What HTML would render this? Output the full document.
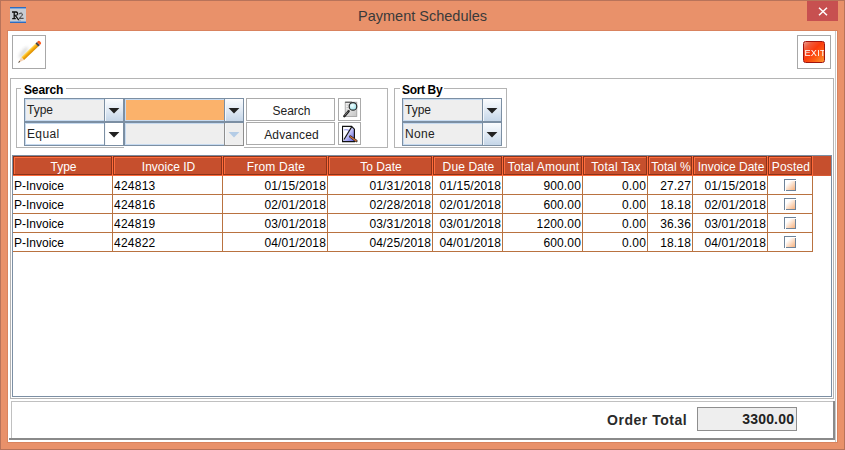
<!DOCTYPE html><html><head><meta charset="utf-8"><style>
html,body{margin:0;padding:0;width:845px;height:450px;overflow:hidden;}
body{position:relative;background:#E9916A;font-family:"Liberation Sans", sans-serif;}
div{box-sizing:border-box;}
</style></head><body>
<div style="position:absolute;left:0;top:0;width:845px;height:450px;border:1px solid #B8735A;"></div>
<div style="position:absolute;left:10px;top:7px;width:16px;height:16px;background:#C8CCD3;overflow:hidden;">
<div style="position:absolute;left:0;top:0;width:16px;height:1px;background:#2D6CC0"></div>
<div style="position:absolute;left:0;top:1px;width:16px;height:1px;background:#7FA6D8"></div>
<div style="position:absolute;left:0;top:14px;width:16px;height:1px;background:#7FA6D8"></div>
<div style="position:absolute;left:0;top:15px;width:16px;height:1px;background:#2D6CC0"></div>
<svg style="position:absolute;left:0;top:0" width="16" height="16" viewBox="0 0 16 16">
<path d="M2 5 L4.2 5 L4.2 11.6 M2.2 11.6 L5.8 11.6 M4.2 5 L6 5 Q7.8 5.2 7.6 7 Q7.4 8.4 5 8.4 L4.4 8.4 M5.4 8.6 L8.8 13.2" stroke="#111" stroke-width="1.3" fill="none"/>
<path d="M8.8 7.4 Q9.8 5.9 11.3 6.1 Q12.8 6.5 12.2 8.2 Q11.6 9.4 9.2 11.3 L13.6 11.3" stroke="#333" stroke-width="1.0" fill="none"/>
<path d="M9.5 13.4 L10.5 13.4" stroke="#5A7AA8" stroke-width="0.8"/>
</svg>
</div>
<div style="position:absolute;left:0px;top:7.78px;width:845px;height:17px;line-height:17px;font-size:14.5px;color:#3A3A3A;font-weight:normal;text-align:center;white-space:nowrap;">Payment Schedules</div>
<div style="position:absolute;left:807px;top:1px;width:31px;height:20px;background:#C75050"></div>
<svg style="position:absolute;left:818px;top:7px" width="10" height="9" viewBox="0 0 10 9"><path d="M1 0.8 L9 8.2 M9 0.8 L1 8.2" stroke="#fff" stroke-width="1.5"/></svg>
<div style="position:absolute;left:8px;top:31px;width:829px;height:411px;background:#fff"></div>
<div style="position:absolute;left:7px;top:30px;width:1px;height:413px;background:#D9835E"></div>
<div style="position:absolute;left:7px;top:30px;width:831px;height:1px;background:#D9835E"></div>
<div style="position:absolute;left:837px;top:30px;width:1px;height:413px;background:#D9835E"></div>
<div style="position:absolute;left:7px;top:442px;width:831px;height:1px;background:#D9835E"></div>
<div style="position:absolute;left:835px;top:31px;width:1px;height:411px;background:#C8C8C8"></div>
<div style="position:absolute;left:12px;top:35px;width:34px;height:34px;border:1px solid #A8A8A8"></div>
<div style="position:absolute;left:797px;top:35px;width:34px;height:34px;border:1px solid #A8A8A8"></div>
<svg style="position:absolute;left:10px;top:33px" width="40" height="40" viewBox="0 0 40 40">
<defs><linearGradient id="pb" x1="0" y1="0" x2="0" y2="1"><stop offset="0" stop-color="#FFE070"/><stop offset="0.45" stop-color="#F8B010"/><stop offset="1" stop-color="#D88A00"/></linearGradient>
<linearGradient id="pw" x1="0" y1="0" x2="1" y2="0"><stop offset="0" stop-color="#E8B890"/><stop offset="1" stop-color="#F8DCC0"/></linearGradient>
<filter id="bl" x="-50%" y="-50%" width="200%" height="200%"><feGaussianBlur stdDeviation="1.6"/></filter></defs>
<ellipse cx="0" cy="0" rx="7" ry="2.2" fill="#999" opacity="0.35" filter="url(#bl)" transform="translate(13.5,19.5) rotate(-52)"/>
<g transform="translate(8.2,29.8) rotate(-43.6)">
<path d="M0 0 L6.2 -2.0 L6.2 2.0 Z" fill="url(#pw)"/>
<path d="M0 0 L2.0 -0.7 L2.0 0.7 Z" fill="#222"/>
<rect x="6.2" y="-2.0" width="19.6" height="4.0" fill="url(#pb)"/>
<rect x="25.8" y="-2.0" width="2.2" height="4.0" fill="#2A2A2A"/>
<rect x="26.8" y="-2.0" width="0.5" height="4.0" fill="#999"/>
<path d="M28 -2.0 L29.4 -2.0 Q30.6 -2.0 30.6 0 Q30.6 2.0 29.4 2.0 L28 2.0 Z" fill="#FF5A1E"/>
</g>
</svg>
<div style="position:absolute;left:803px;top:41px;width:22px;height:22px;border:1px solid #A0140E;border-radius:2.5px;background:linear-gradient(135deg,#EC9A8C 0%,#F05A3A 20%,#FA3A0C 45%,#FC5A14 68%,#FF9830 100%);overflow:hidden;">
<div style="position:absolute;left:0px;top:6.4px;width:20px;text-align:center;font-size:9.6px;line-height:10px;color:#fff;letter-spacing:0.3px;transform:scaleX(0.95);transform-origin:center;">EXIT</div>
</div>
<div style="position:absolute;left:10px;top:78px;width:824px;height:321px;border:1px solid #B4B4B4"></div>
<div style="position:absolute;left:16px;top:88px;width:1px;height:60px;background:#B4B4B4"></div>
<div style="position:absolute;left:387px;top:88px;width:1px;height:60px;background:#B4B4B4"></div>
<div style="position:absolute;left:16px;top:88px;width:5px;height:1px;background:#B4B4B4"></div>
<div style="position:absolute;left:66px;top:88px;width:322px;height:1px;background:#B4B4B4"></div>
<div style="position:absolute;left:16px;top:147px;width:108px;height:1px;background:#B4B4B4"></div>
<div style="position:absolute;left:244px;top:147px;width:144px;height:1px;background:#B4B4B4"></div>
<div style="position:absolute;left:24px;top:82.54px;white-space:nowrap;height:14px;line-height:14px;font-size:12px;color:#000;font-weight:bold;text-align:left;white-space:nowrap;letter-spacing:-0.15px;">Search</div>
<div style="position:absolute;left:394px;top:88px;width:1px;height:60px;background:#B4B4B4"></div>
<div style="position:absolute;left:506px;top:88px;width:1px;height:60px;background:#B4B4B4"></div>
<div style="position:absolute;left:394px;top:88px;width:6px;height:1px;background:#B4B4B4"></div>
<div style="position:absolute;left:444px;top:88px;width:63px;height:1px;background:#B4B4B4"></div>
<div style="position:absolute;left:394px;top:147px;width:113px;height:1px;background:#B4B4B4"></div>
<div style="position:absolute;left:402px;top:82.54px;white-space:nowrap;height:14px;line-height:14px;font-size:12px;color:#000;font-weight:bold;text-align:left;white-space:nowrap;letter-spacing:-0.35px;">Sort By</div>
<div style="position:absolute;left:24px;top:98px;width:100px;height:24px;border:1px solid #7C8FA3;background:#EEEEEE;box-shadow:inset 0 0 0 1px #C6DAF0;"></div>
<div style="position:absolute;left:105px;top:99px;width:18px;height:22px;background:linear-gradient(#FBFCFE,#E4ECF5 45%,#C5D6E8);box-shadow:inset 1px 0 0 #F4F8FC;"></div>
<div style="position:absolute;left:104px;top:99px;width:1px;height:22px;background:#7C8FA3"></div>
<svg style="position:absolute;left:108.0px;top:108px" width="12" height="6" viewBox="0 0 12 6"><path d="M0.6 0 L11.4 0 L6 5.6 Z" fill="#222"/></svg>
<div style="position:absolute;left:27px;top:102.84px;white-space:nowrap;height:14px;line-height:14px;font-size:12px;color:#222;font-weight:normal;text-align:left;white-space:nowrap;letter-spacing:0px;">Type</div>
<div style="position:absolute;left:24px;top:122px;width:100px;height:24px;border:1px solid #7C8FA3;background:#FFFFFF;box-shadow:inset 0 0 0 1px #C6DAF0;"></div>
<div style="position:absolute;left:105px;top:123px;width:18px;height:22px;background:#fff;box-shadow:inset 1px 0 0 #F4F8FC;"></div>
<div style="position:absolute;left:104px;top:123px;width:1px;height:22px;background:#7C8FA3"></div>
<svg style="position:absolute;left:108.0px;top:132px" width="12" height="6" viewBox="0 0 12 6"><path d="M0.6 0 L11.4 0 L6 5.6 Z" fill="#222"/></svg>
<div style="position:absolute;left:27px;top:126.84px;white-space:nowrap;height:14px;line-height:14px;font-size:12px;color:#222;font-weight:normal;text-align:left;white-space:nowrap;letter-spacing:0.35px;">Equal</div>
<div style="position:absolute;left:124px;top:98px;width:120px;height:24px;border:1px solid #7C8FA3;background:#FBB26B;box-shadow:inset 0 0 0 1px #C6DAF0;"></div>
<div style="position:absolute;left:225px;top:99px;width:18px;height:22px;background:linear-gradient(#FBFCFE,#E4ECF5 45%,#C5D6E8);box-shadow:inset 1px 0 0 #F4F8FC;"></div>
<div style="position:absolute;left:224px;top:99px;width:1px;height:22px;background:#7C8FA3"></div>
<svg style="position:absolute;left:228.0px;top:108px" width="12" height="6" viewBox="0 0 12 6"><path d="M0.6 0 L11.4 0 L6 5.6 Z" fill="#222"/></svg>
<div style="position:absolute;left:124px;top:122px;width:120px;height:24px;border:1px solid #7C8FA3;background:#EEEEEE;box-shadow:inset 0 0 0 1px #C6DAF0;"></div>
<div style="position:absolute;left:225px;top:123px;width:18px;height:22px;background:#EEEEEE;box-shadow:inset 1px 0 0 #F4F8FC;"></div>
<div style="position:absolute;left:224px;top:123px;width:1px;height:22px;background:#7C8FA3"></div>
<svg style="position:absolute;left:228.0px;top:132px" width="12" height="6" viewBox="0 0 12 6"><path d="M0.6 0 L11.4 0 L6 5.6 Z" fill="#B4CCE6"/></svg>
<div style="position:absolute;left:224px;top:123px;width:1px;height:23px;background:#8E8E8E"></div>
<div style="position:absolute;left:243px;top:123px;width:1px;height:23px;background:#8E8E8E"></div>
<div style="position:absolute;left:224px;top:145px;width:20px;height:1px;background:#8E8E8E"></div>
<div style="position:absolute;left:225px;top:123px;width:18px;height:1px;background:#EEEEEE"></div>
<div style="position:absolute;left:242px;top:123px;width:1px;height:22px;background:#EEEEEE"></div>
<div style="position:absolute;left:225px;top:144px;width:18px;height:1px;background:#EEEEEE"></div>
<div style="position:absolute;left:402px;top:98px;width:100px;height:24px;border:1px solid #7C8FA3;background:#EEEEEE;box-shadow:inset 0 0 0 1px #C6DAF0;"></div>
<div style="position:absolute;left:483px;top:99px;width:18px;height:22px;background:linear-gradient(#FBFCFE,#E4ECF5 45%,#C5D6E8);box-shadow:inset 1px 0 0 #F4F8FC;"></div>
<div style="position:absolute;left:482px;top:99px;width:1px;height:22px;background:#7C8FA3"></div>
<svg style="position:absolute;left:486.0px;top:108px" width="12" height="6" viewBox="0 0 12 6"><path d="M0.6 0 L11.4 0 L6 5.6 Z" fill="#222"/></svg>
<div style="position:absolute;left:405px;top:102.84px;white-space:nowrap;height:14px;line-height:14px;font-size:12px;color:#222;font-weight:normal;text-align:left;white-space:nowrap;letter-spacing:0px;">Type</div>
<div style="position:absolute;left:402px;top:122px;width:100px;height:24px;border:1px solid #7C8FA3;background:#EEEEEE;box-shadow:inset 0 0 0 1px #C6DAF0;"></div>
<div style="position:absolute;left:483px;top:123px;width:18px;height:22px;background:linear-gradient(#FBFCFE,#E4ECF5 45%,#C5D6E8);box-shadow:inset 1px 0 0 #F4F8FC;"></div>
<div style="position:absolute;left:482px;top:123px;width:1px;height:22px;background:#7C8FA3"></div>
<svg style="position:absolute;left:486.0px;top:132px" width="12" height="6" viewBox="0 0 12 6"><path d="M0.6 0 L11.4 0 L6 5.6 Z" fill="#222"/></svg>
<div style="position:absolute;left:405px;top:126.84px;white-space:nowrap;height:14px;line-height:14px;font-size:12px;color:#222;font-weight:normal;text-align:left;white-space:nowrap;letter-spacing:0.3px;">None</div>
<div style="position:absolute;left:246px;top:98px;width:89px;height:23px;border:1px solid #ABABAB;background:#fff;"></div>
<div style="position:absolute;left:247px;top:103.84px;width:89px;height:14px;line-height:14px;font-size:12px;color:#222;font-weight:normal;text-align:center;white-space:nowrap;letter-spacing:0px;">Search</div>
<div style="position:absolute;left:246px;top:122px;width:89px;height:23px;border:1px solid #ABABAB;background:#fff;"></div>
<div style="position:absolute;left:247px;top:127.84px;width:89px;height:14px;line-height:14px;font-size:12px;color:#222;font-weight:normal;text-align:center;white-space:nowrap;letter-spacing:0.15px;">Advanced</div>
<div style="position:absolute;left:338px;top:98px;width:23px;height:23px;border:1px solid #ABABAB;background:#fff;"></div>
<div style="position:absolute;left:338px;top:122px;width:23px;height:23px;border:1px solid #ABABAB;background:#fff;"></div>
<svg style="position:absolute;left:336px;top:96px" width="28" height="28" viewBox="0 0 28 28">
<defs><linearGradient id="dg" x1="0" y1="0" x2="1" y2="1"><stop offset="0" stop-color="#F8F8F8"/><stop offset="1" stop-color="#C4C4C4"/></linearGradient>
<radialGradient id="lg" cx="0.4" cy="0.4" r="0.65"><stop offset="0" stop-color="#F4FFFF"/><stop offset="1" stop-color="#98E0EA"/></radialGradient></defs>
<rect x="9.2" y="6.2" width="11.6" height="14.3" fill="url(#dg)" stroke="#9C9C9C" stroke-width="0.8"/>
<path d="M9.2 6.2 L16 6.2" stroke="#444" stroke-width="1"/>
<path d="M10.5 9 L13 9 M10.5 11.5 L12.5 11.5 M10.5 14 L12.5 14" stroke="#B8B8B8" stroke-width="0.8"/>
<path d="M8.3 20.2 L12.6 15.2" stroke="#222" stroke-width="2.4" stroke-linecap="round"/>
<path d="M8.8 19.4 L12 15.6" stroke="#A0A0A0" stroke-width="0.7"/>
<circle cx="17" cy="10.4" r="3.8" fill="url(#lg)" stroke="#2A2A2A" stroke-width="1.2"/>
</svg>
<svg style="position:absolute;left:336px;top:120px" width="28" height="28" viewBox="0 0 28 28">
<defs><linearGradient id="ag" x1="0" y1="0" x2="1" y2="1"><stop offset="0" stop-color="#FFFFFF"/><stop offset="0.4" stop-color="#D8D8FA"/><stop offset="1" stop-color="#5A5AE0"/></linearGradient></defs>
<path d="M6.6 6.4 L15.6 6.4 L18.4 9.2 L18.4 21.6 L6.6 21.6 Z" fill="url(#ag)" stroke="#111" stroke-width="1.2"/>
<path d="M7.2 21 L7.2 7 L15 7 Z" fill="#fff" opacity="0.85"/>
<path d="M8 10 Q11 9 13.5 11" stroke="#A8A8F0" stroke-width="1.2" fill="none"/>
<path d="M8 19.5 L15.6 7" stroke="#111" stroke-width="1.2"/>
<path d="M14.2 16.6 L20.4 21" stroke="#222" stroke-width="2.4" stroke-linecap="round"/>
<path d="M14.4 16.7 L20.2 20.9" stroke="#D0703A" stroke-width="1.3" stroke-linecap="round"/>
</svg>
<div style="position:absolute;left:12px;top:155px;width:820px;height:1px;background:#7C8FA3"></div>
<div style="position:absolute;left:12px;top:155px;width:1px;height:242px;background:#7C8FA3"></div>
<div style="position:absolute;left:831px;top:155px;width:1px;height:242px;background:#7C8FA3"></div>
<div style="position:absolute;left:12px;top:396px;width:820px;height:1px;background:#7C8FA3"></div>
<div style="position:absolute;left:13px;top:156px;width:818px;height:20px;background:#C64F2D"></div>
<div style="position:absolute;left:13px;top:156px;width:800px;height:20px;background:#FF6A3A"></div>
<div style="position:absolute;left:13px;top:156px;width:99px;height:19px;border:1px solid #8C3319;background:#C64F2D;box-shadow:inset 1px 1px 0 #FF6E3E;"></div>
<div style="position:absolute;left:14px;top:159.84px;width:99px;height:14px;line-height:14px;font-size:12px;color:#FFFFFF;font-weight:normal;text-align:center;white-space:nowrap;letter-spacing:0px;">Type</div>
<div style="position:absolute;left:113px;top:156px;width:109px;height:19px;border:1px solid #8C3319;background:#C64F2D;box-shadow:inset 1px 1px 0 #FF6E3E;"></div>
<div style="position:absolute;left:114px;top:159.84px;width:109px;height:14px;line-height:14px;font-size:12px;color:#FFFFFF;font-weight:normal;text-align:center;white-space:nowrap;letter-spacing:0px;">Invoice ID</div>
<div style="position:absolute;left:223px;top:156px;width:104px;height:19px;border:1px solid #8C3319;background:#C64F2D;box-shadow:inset 1px 1px 0 #FF6E3E;"></div>
<div style="position:absolute;left:224px;top:159.84px;width:104px;height:14px;line-height:14px;font-size:12px;color:#FFFFFF;font-weight:normal;text-align:center;white-space:nowrap;letter-spacing:0.2px;">From Date</div>
<div style="position:absolute;left:328px;top:156px;width:104px;height:19px;border:1px solid #8C3319;background:#C64F2D;box-shadow:inset 1px 1px 0 #FF6E3E;"></div>
<div style="position:absolute;left:329px;top:159.84px;width:104px;height:14px;line-height:14px;font-size:12px;color:#FFFFFF;font-weight:normal;text-align:center;white-space:nowrap;letter-spacing:0px;">To Date</div>
<div style="position:absolute;left:433px;top:156px;width:69px;height:19px;border:1px solid #8C3319;background:#C64F2D;box-shadow:inset 1px 1px 0 #FF6E3E;"></div>
<div style="position:absolute;left:434px;top:159.84px;width:69px;height:14px;line-height:14px;font-size:12px;color:#FFFFFF;font-weight:normal;text-align:center;white-space:nowrap;letter-spacing:0.14px;">Due Date</div>
<div style="position:absolute;left:503px;top:156px;width:79px;height:19px;border:1px solid #8C3319;background:#C64F2D;box-shadow:inset 1px 1px 0 #FF6E3E;"></div>
<div style="position:absolute;left:504px;top:159.84px;width:79px;height:14px;line-height:14px;font-size:12px;color:#FFFFFF;font-weight:normal;text-align:center;white-space:nowrap;letter-spacing:0.18px;">Total Amount</div>
<div style="position:absolute;left:583px;top:156px;width:64px;height:19px;border:1px solid #8C3319;background:#C64F2D;box-shadow:inset 1px 1px 0 #FF6E3E;"></div>
<div style="position:absolute;left:584px;top:159.84px;width:64px;height:14px;line-height:14px;font-size:12px;color:#FFFFFF;font-weight:normal;text-align:center;white-space:nowrap;letter-spacing:0.25px;">Total Tax</div>
<div style="position:absolute;left:648px;top:156px;width:44px;height:19px;border:1px solid #8C3319;background:#C64F2D;box-shadow:inset 1px 1px 0 #FF6E3E;"></div>
<div style="position:absolute;left:649px;top:159.84px;width:44px;height:14px;line-height:14px;font-size:12px;color:#FFFFFF;font-weight:normal;text-align:center;white-space:nowrap;letter-spacing:0px;">Total %</div>
<div style="position:absolute;left:693px;top:156px;width:74px;height:19px;border:1px solid #8C3319;background:#C64F2D;box-shadow:inset 1px 1px 0 #FF6E3E;"></div>
<div style="position:absolute;left:694px;top:159.84px;width:74px;height:14px;line-height:14px;font-size:12px;color:#FFFFFF;font-weight:normal;text-align:center;white-space:nowrap;letter-spacing:0px;">Invoice Date</div>
<div style="position:absolute;left:768px;top:156px;width:44px;height:19px;border:1px solid #8C3319;background:#C64F2D;box-shadow:inset 1px 1px 0 #FF6E3E;"></div>
<div style="position:absolute;left:769px;top:159.84px;width:44px;height:14px;line-height:14px;font-size:12px;color:#FFFFFF;font-weight:normal;text-align:center;white-space:nowrap;letter-spacing:0.17px;">Posted</div>
<div style="position:absolute;left:13px;top:175px;width:800px;height:1px;background:#FF6A3A"></div>
<div style="position:absolute;left:813px;top:175px;width:18px;height:1px;background:#D85A34"></div>
<div style="position:absolute;left:13px;top:194px;width:800px;height:1px;background:#B97240"></div>
<div style="position:absolute;left:14px;top:179.34px;white-space:nowrap;height:14px;line-height:14px;font-size:12px;color:#000;font-weight:normal;text-align:left;white-space:nowrap;">P-Invoice</div>
<div style="position:absolute;left:114px;top:179.34px;white-space:nowrap;height:14px;line-height:14px;font-size:12px;color:#000;font-weight:normal;text-align:left;white-space:nowrap;letter-spacing:0.25px;">424813</div>
<div style="position:absolute;left:223px;top:179.34px;width:103px;height:14px;line-height:14px;font-size:12px;color:#000;font-weight:normal;text-align:right;white-space:nowrap;letter-spacing:0.15px;">01/15/2018</div>
<div style="position:absolute;left:328px;top:179.34px;width:103px;height:14px;line-height:14px;font-size:12px;color:#000;font-weight:normal;text-align:right;white-space:nowrap;letter-spacing:0.15px;">01/31/2018</div>
<div style="position:absolute;left:433px;top:179.34px;width:68px;height:14px;line-height:14px;font-size:12px;color:#000;font-weight:normal;text-align:right;white-space:nowrap;letter-spacing:0.15px;">01/15/2018</div>
<div style="position:absolute;left:503px;top:179.34px;width:78px;height:14px;line-height:14px;font-size:12px;color:#000;font-weight:normal;text-align:right;white-space:nowrap;letter-spacing:0.15px;">900.00</div>
<div style="position:absolute;left:583px;top:179.34px;width:63px;height:14px;line-height:14px;font-size:12px;color:#000;font-weight:normal;text-align:right;white-space:nowrap;letter-spacing:0.15px;">0.00</div>
<div style="position:absolute;left:648px;top:179.34px;width:43px;height:14px;line-height:14px;font-size:12px;color:#000;font-weight:normal;text-align:right;white-space:nowrap;letter-spacing:0.15px;">27.27</div>
<div style="position:absolute;left:693px;top:179.34px;width:73px;height:14px;line-height:14px;font-size:12px;color:#000;font-weight:normal;text-align:right;white-space:nowrap;letter-spacing:0.15px;">01/15/2018</div>
<div style="position:absolute;left:786px;top:181px;width:9px;height:9px;background:linear-gradient(135deg,#FFFFFF 22%,#FCE2CE 50%,#F7B07C 100%)"></div>
<div style="position:absolute;left:784px;top:179px;width:12px;height:1px;background:#6E8399"></div>
<div style="position:absolute;left:784px;top:179px;width:1px;height:12px;background:#6E8399"></div>
<div style="position:absolute;left:795px;top:181px;width:1px;height:10px;background:#6E8399"></div>
<div style="position:absolute;left:786px;top:190px;width:10px;height:1px;background:#6E8399"></div>
<div style="position:absolute;left:13px;top:213px;width:800px;height:1px;background:#B97240"></div>
<div style="position:absolute;left:14px;top:198.34px;white-space:nowrap;height:14px;line-height:14px;font-size:12px;color:#000;font-weight:normal;text-align:left;white-space:nowrap;">P-Invoice</div>
<div style="position:absolute;left:114px;top:198.34px;white-space:nowrap;height:14px;line-height:14px;font-size:12px;color:#000;font-weight:normal;text-align:left;white-space:nowrap;letter-spacing:0.25px;">424816</div>
<div style="position:absolute;left:223px;top:198.34px;width:103px;height:14px;line-height:14px;font-size:12px;color:#000;font-weight:normal;text-align:right;white-space:nowrap;letter-spacing:0.15px;">02/01/2018</div>
<div style="position:absolute;left:328px;top:198.34px;width:103px;height:14px;line-height:14px;font-size:12px;color:#000;font-weight:normal;text-align:right;white-space:nowrap;letter-spacing:0.15px;">02/28/2018</div>
<div style="position:absolute;left:433px;top:198.34px;width:68px;height:14px;line-height:14px;font-size:12px;color:#000;font-weight:normal;text-align:right;white-space:nowrap;letter-spacing:0.15px;">02/01/2018</div>
<div style="position:absolute;left:503px;top:198.34px;width:78px;height:14px;line-height:14px;font-size:12px;color:#000;font-weight:normal;text-align:right;white-space:nowrap;letter-spacing:0.15px;">600.00</div>
<div style="position:absolute;left:583px;top:198.34px;width:63px;height:14px;line-height:14px;font-size:12px;color:#000;font-weight:normal;text-align:right;white-space:nowrap;letter-spacing:0.15px;">0.00</div>
<div style="position:absolute;left:648px;top:198.34px;width:43px;height:14px;line-height:14px;font-size:12px;color:#000;font-weight:normal;text-align:right;white-space:nowrap;letter-spacing:0.15px;">18.18</div>
<div style="position:absolute;left:693px;top:198.34px;width:73px;height:14px;line-height:14px;font-size:12px;color:#000;font-weight:normal;text-align:right;white-space:nowrap;letter-spacing:0.15px;">02/01/2018</div>
<div style="position:absolute;left:786px;top:200px;width:9px;height:9px;background:linear-gradient(135deg,#FFFFFF 22%,#FCE2CE 50%,#F7B07C 100%)"></div>
<div style="position:absolute;left:784px;top:198px;width:12px;height:1px;background:#6E8399"></div>
<div style="position:absolute;left:784px;top:198px;width:1px;height:12px;background:#6E8399"></div>
<div style="position:absolute;left:795px;top:200px;width:1px;height:10px;background:#6E8399"></div>
<div style="position:absolute;left:786px;top:209px;width:10px;height:1px;background:#6E8399"></div>
<div style="position:absolute;left:13px;top:232px;width:800px;height:1px;background:#B97240"></div>
<div style="position:absolute;left:14px;top:217.34px;white-space:nowrap;height:14px;line-height:14px;font-size:12px;color:#000;font-weight:normal;text-align:left;white-space:nowrap;">P-Invoice</div>
<div style="position:absolute;left:114px;top:217.34px;white-space:nowrap;height:14px;line-height:14px;font-size:12px;color:#000;font-weight:normal;text-align:left;white-space:nowrap;letter-spacing:0.25px;">424819</div>
<div style="position:absolute;left:223px;top:217.34px;width:103px;height:14px;line-height:14px;font-size:12px;color:#000;font-weight:normal;text-align:right;white-space:nowrap;letter-spacing:0.15px;">03/01/2018</div>
<div style="position:absolute;left:328px;top:217.34px;width:103px;height:14px;line-height:14px;font-size:12px;color:#000;font-weight:normal;text-align:right;white-space:nowrap;letter-spacing:0.15px;">03/31/2018</div>
<div style="position:absolute;left:433px;top:217.34px;width:68px;height:14px;line-height:14px;font-size:12px;color:#000;font-weight:normal;text-align:right;white-space:nowrap;letter-spacing:0.15px;">03/01/2018</div>
<div style="position:absolute;left:503px;top:217.34px;width:78px;height:14px;line-height:14px;font-size:12px;color:#000;font-weight:normal;text-align:right;white-space:nowrap;letter-spacing:0.15px;">1200.00</div>
<div style="position:absolute;left:583px;top:217.34px;width:63px;height:14px;line-height:14px;font-size:12px;color:#000;font-weight:normal;text-align:right;white-space:nowrap;letter-spacing:0.15px;">0.00</div>
<div style="position:absolute;left:648px;top:217.34px;width:43px;height:14px;line-height:14px;font-size:12px;color:#000;font-weight:normal;text-align:right;white-space:nowrap;letter-spacing:0.15px;">36.36</div>
<div style="position:absolute;left:693px;top:217.34px;width:73px;height:14px;line-height:14px;font-size:12px;color:#000;font-weight:normal;text-align:right;white-space:nowrap;letter-spacing:0.15px;">03/01/2018</div>
<div style="position:absolute;left:786px;top:219px;width:9px;height:9px;background:linear-gradient(135deg,#FFFFFF 22%,#FCE2CE 50%,#F7B07C 100%)"></div>
<div style="position:absolute;left:784px;top:217px;width:12px;height:1px;background:#6E8399"></div>
<div style="position:absolute;left:784px;top:217px;width:1px;height:12px;background:#6E8399"></div>
<div style="position:absolute;left:795px;top:219px;width:1px;height:10px;background:#6E8399"></div>
<div style="position:absolute;left:786px;top:228px;width:10px;height:1px;background:#6E8399"></div>
<div style="position:absolute;left:13px;top:251px;width:800px;height:1px;background:#B97240"></div>
<div style="position:absolute;left:14px;top:236.34px;white-space:nowrap;height:14px;line-height:14px;font-size:12px;color:#000;font-weight:normal;text-align:left;white-space:nowrap;">P-Invoice</div>
<div style="position:absolute;left:114px;top:236.34px;white-space:nowrap;height:14px;line-height:14px;font-size:12px;color:#000;font-weight:normal;text-align:left;white-space:nowrap;letter-spacing:0.25px;">424822</div>
<div style="position:absolute;left:223px;top:236.34px;width:103px;height:14px;line-height:14px;font-size:12px;color:#000;font-weight:normal;text-align:right;white-space:nowrap;letter-spacing:0.15px;">04/01/2018</div>
<div style="position:absolute;left:328px;top:236.34px;width:103px;height:14px;line-height:14px;font-size:12px;color:#000;font-weight:normal;text-align:right;white-space:nowrap;letter-spacing:0.15px;">04/25/2018</div>
<div style="position:absolute;left:433px;top:236.34px;width:68px;height:14px;line-height:14px;font-size:12px;color:#000;font-weight:normal;text-align:right;white-space:nowrap;letter-spacing:0.15px;">04/01/2018</div>
<div style="position:absolute;left:503px;top:236.34px;width:78px;height:14px;line-height:14px;font-size:12px;color:#000;font-weight:normal;text-align:right;white-space:nowrap;letter-spacing:0.15px;">600.00</div>
<div style="position:absolute;left:583px;top:236.34px;width:63px;height:14px;line-height:14px;font-size:12px;color:#000;font-weight:normal;text-align:right;white-space:nowrap;letter-spacing:0.15px;">0.00</div>
<div style="position:absolute;left:648px;top:236.34px;width:43px;height:14px;line-height:14px;font-size:12px;color:#000;font-weight:normal;text-align:right;white-space:nowrap;letter-spacing:0.15px;">18.18</div>
<div style="position:absolute;left:693px;top:236.34px;width:73px;height:14px;line-height:14px;font-size:12px;color:#000;font-weight:normal;text-align:right;white-space:nowrap;letter-spacing:0.15px;">04/01/2018</div>
<div style="position:absolute;left:786px;top:238px;width:9px;height:9px;background:linear-gradient(135deg,#FFFFFF 22%,#FCE2CE 50%,#F7B07C 100%)"></div>
<div style="position:absolute;left:784px;top:236px;width:12px;height:1px;background:#6E8399"></div>
<div style="position:absolute;left:784px;top:236px;width:1px;height:12px;background:#6E8399"></div>
<div style="position:absolute;left:795px;top:238px;width:1px;height:10px;background:#6E8399"></div>
<div style="position:absolute;left:786px;top:247px;width:10px;height:1px;background:#6E8399"></div>
<div style="position:absolute;left:112px;top:176px;width:1px;height:76px;background:#B97240"></div>
<div style="position:absolute;left:222px;top:176px;width:1px;height:76px;background:#B97240"></div>
<div style="position:absolute;left:327px;top:176px;width:1px;height:76px;background:#B97240"></div>
<div style="position:absolute;left:432px;top:176px;width:1px;height:76px;background:#B97240"></div>
<div style="position:absolute;left:502px;top:176px;width:1px;height:76px;background:#B97240"></div>
<div style="position:absolute;left:582px;top:176px;width:1px;height:76px;background:#B97240"></div>
<div style="position:absolute;left:647px;top:176px;width:1px;height:76px;background:#B97240"></div>
<div style="position:absolute;left:692px;top:176px;width:1px;height:76px;background:#B97240"></div>
<div style="position:absolute;left:767px;top:176px;width:1px;height:76px;background:#B97240"></div>
<div style="position:absolute;left:812px;top:176px;width:1px;height:76px;background:#B97240"></div>
<div style="position:absolute;left:11px;top:401px;width:823px;height:1px;background:#C0C0C0"></div>
<div style="position:absolute;left:11px;top:401px;width:1px;height:39px;background:#C0C0C0"></div>
<div style="position:absolute;left:833px;top:401px;width:2px;height:39px;background:#8A8A8A"></div>
<div style="position:absolute;left:9px;top:438px;width:826px;height:2px;background:#8A8A8A"></div>
<div style="position:absolute;left:607px;top:411.55px;white-space:nowrap;height:17px;line-height:17px;font-size:14px;color:#2A2A2A;font-weight:bold;text-align:left;white-space:nowrap;letter-spacing:0.52px;">Order Total</div>
<div style="position:absolute;left:697px;top:407px;width:100px;height:24px;border:1px solid #8E8E8E;background:#EEEEEE;"></div>
<div style="position:absolute;left:697px;top:411.45px;width:97.2px;height:17px;line-height:17px;font-size:14px;color:#222;font-weight:bold;text-align:right;white-space:nowrap;letter-spacing:0.2px;">3300.00</div>
</body></html>
